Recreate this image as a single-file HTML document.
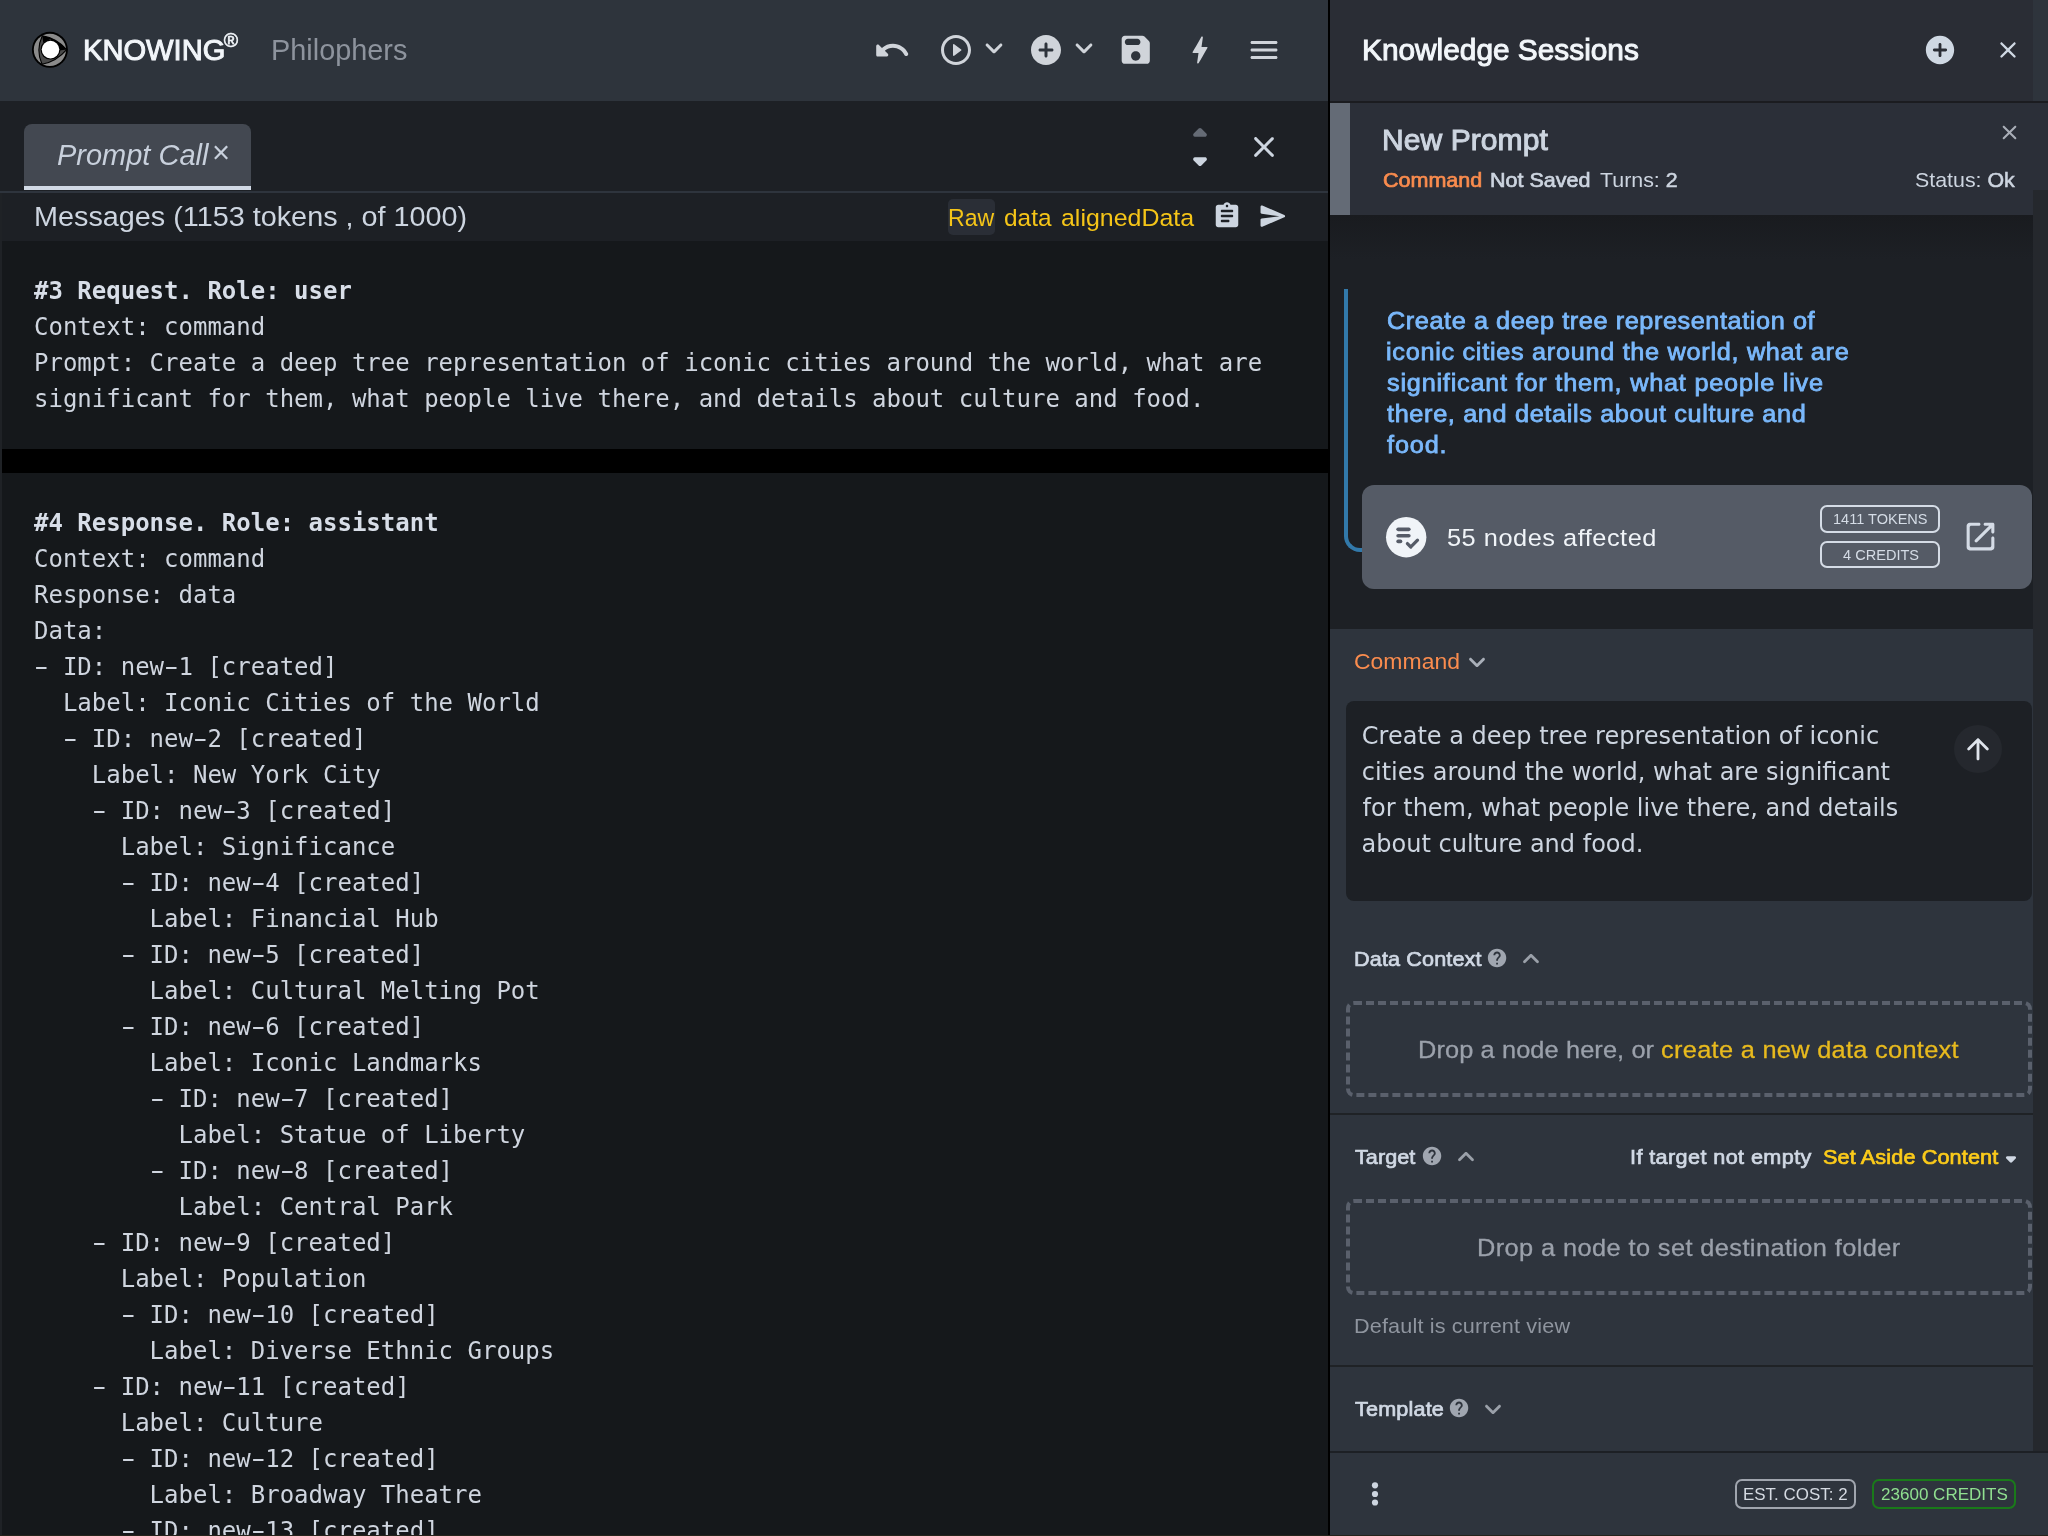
<!DOCTYPE html>
<html lang="en">
<head>
<meta charset="utf-8">
<title>KNOWING - Philophers</title>
<style>
*{box-sizing:border-box;margin:0;padding:0}
html,body{width:2048px;height:1536px;overflow:hidden;background:#15181b}
body{font-family:"Liberation Sans",sans-serif;color:#d0d6e0;position:relative}
.abs{position:absolute}
.t{position:absolute;white-space:pre;line-height:1;transform-origin:0 0}
svg{position:absolute;display:block;overflow:visible}
#left{position:absolute;left:0;top:0;width:1328px;height:1536px;background:#15181b;overflow:hidden;will-change:transform}
#lhead{position:absolute;left:0;top:0;width:1328px;height:101px;background:#2e343c}
#tabbar{position:absolute;left:0;top:101px;width:1328px;height:90px;background:#1d2025}
#tab{position:absolute;left:24px;top:124px;width:227px;height:66px;background:#434851;border-radius:8px 8px 0 0;border-bottom:4px solid #d2dae6}
#tabline{position:absolute;left:0;top:191px;width:1328px;height:2px;background:#2e343d}
#msgbar{position:absolute;left:0;top:193px;width:1328px;height:48px;background:#1d2025}
#ledge{position:absolute;left:0;top:193px;width:2px;height:1343px;background:#1f2226}
#band{position:absolute;left:2px;top:449px;width:1326px;height:24px;background:#000}
pre{position:absolute;left:34px;font-family:"DejaVu Sans Mono","Liberation Mono",monospace;font-size:24px;line-height:36px;color:#cfd5df;white-space:pre}
pre b{font-weight:bold;color:#d8dee8}
#divider{position:absolute;left:1328px;top:0;width:2px;height:1536px;background:#000}
#right{position:absolute;left:1330px;top:0;width:718px;height:1536px;background:#1d2025;overflow:hidden;will-change:transform}
#rhead{position:absolute;left:0;top:0;width:718px;height:101px;background:#2a2d35}
#rheadsb{position:absolute;left:703px;top:0;width:15px;height:101px;background:#2e343c}
#rline{position:absolute;left:0;top:101px;width:718px;height:2px;background:#1b1c20}
#sess{position:absolute;left:0;top:103px;width:718px;height:112px;background:#2b2f38}
#strip{position:absolute;left:0;top:103px;width:20px;height:112px;background:#646b76}
#chat{position:absolute;left:0;top:215px;width:703px;height:414px;background:linear-gradient(#191b1f,#1d2025 44px)}
#form{position:absolute;left:0;top:629px;width:703px;height:822px;background:#2e343d}
#sb{position:absolute;left:703px;top:190px;width:15px;height:1261px;background:#25282d}
#foot{position:absolute;left:0;top:1451px;width:718px;height:85px;background:#2e343d;border-top:2px solid #1d2025}
pre .h{display:inline-block;transform:scaleX(1.7)}
#bline{z-index:5;position:absolute;left:0;top:1535px;width:2048px;height:1px;background:#25231b}
.sep{position:absolute;left:0;width:703px;height:2px;background:#1f2226}
.dash{position:absolute;left:16px;width:686px;height:96px;border:4px dashed #5a606c;border-radius:8px}
.sb{-webkit-text-stroke:0.55px currentColor}
.badge{position:absolute;border:2px solid #d5dce6;border-radius:7px}
</style>
</head>
<body>
<div id="left">
<div id="lhead"></div><div id="tabbar"></div><div id="tab"></div><div id="tabline"></div><div id="msgbar"></div><div id="ledge"></div><div id="band"></div>
<pre style="top:273px"><b>#3 Request. Role: user</b>
Context: command
Prompt: Create a deep tree representation of iconic cities around the world, what are
significant for them, what people live there, and details about culture and food.</pre>
<pre style="top:505px"><b>#4 Response. Role: assistant</b>
Context: command
Response: data
Data:
<span class="h">-</span> ID: new<span class="h">-</span>1 [created]
  Label: Iconic Cities of the World
  <span class="h">-</span> ID: new<span class="h">-</span>2 [created]
    Label: New York City
    <span class="h">-</span> ID: new<span class="h">-</span>3 [created]
      Label: Significance
      <span class="h">-</span> ID: new<span class="h">-</span>4 [created]
        Label: Financial Hub
      <span class="h">-</span> ID: new<span class="h">-</span>5 [created]
        Label: Cultural Melting Pot
      <span class="h">-</span> ID: new<span class="h">-</span>6 [created]
        Label: Iconic Landmarks
        <span class="h">-</span> ID: new<span class="h">-</span>7 [created]
          Label: Statue of Liberty
        <span class="h">-</span> ID: new<span class="h">-</span>8 [created]
          Label: Central Park
    <span class="h">-</span> ID: new<span class="h">-</span>9 [created]
      Label: Population
      <span class="h">-</span> ID: new<span class="h">-</span>10 [created]
        Label: Diverse Ethnic Groups
    <span class="h">-</span> ID: new<span class="h">-</span>11 [created]
      Label: Culture
      <span class="h">-</span> ID: new<span class="h">-</span>12 [created]
        Label: Broadway Theatre
      <span class="h">-</span> ID: new<span class="h">-</span>13 [created]
        Label: Museums</pre>
<svg id="logo" viewBox="0 0 48 48" width="48" height="48" style="left:26px;top:26px">
<circle cx="23.9" cy="23.8" r="18" fill="#000"/>
<circle cx="23.9" cy="23.8" r="16.1" fill="#8b8b8b"/>
<path d="M16.3 9.7Q31 12.2 40.6 23.6Q30.8 35.3 16 38.3Q9.6 24 16.3 9.7Z" fill="#4b4b4b" stroke="#000" stroke-width="1.1" stroke-linejoin="round"/>
<path d="M16.3 9.7Q31 12.2 40.6 23.6L33.5 24.4L24.5 13L17.2 16.5Z" fill="#000"/>
<circle cx="24.5" cy="23.6" r="10" fill="#000"/>
<circle cx="24.5" cy="23.6" r="8.8" fill="#fff"/>
</svg>
<div class="t" id="brand" style="left:83.01px;top:35px;font-size:29.3px;color:#f2f6fa;transform:scaleX(0.9943);-webkit-text-stroke:1.0px currentColor;">KNOWING</div>
<div class="t" id="reg" style="left:223.70px;top:31px;font-size:19.5px;color:#f2f6fa;-webkit-text-stroke:0.6px currentColor;">®</div>
<div class="t" id="proj" style="left:270.54px;top:35px;font-size:29.3px;color:#8d939d;transform:scaleX(0.9852);">Philophers</div>
<svg viewBox="0 0 24 24" width="38.3" height="38.3" style="left:872.85px;top:30.85px"><path fill="#d0d4da" d="M12.5 8c-2.65 0-5.05.99-6.9 2.6L3.71 8.71C3.08 8.08 2 8.52 2 9.41V15c0 .55.45 1 1 1h5.59c.89 0 1.34-1.08.71-1.71l-1.91-1.91c1.39-1.16 3.16-1.88 5.12-1.88 3.16 0 5.89 1.84 7.19 4.5.27.56.91.84 1.5.64.71-.23 1.07-1.04.75-1.72C20.23 10.42 16.65 8 12.5 8z"/></svg>
<svg viewBox="0 0 24 24" width="36" height="36" style="left:938px;top:32px"><path fill="#d0d4da" d="M10.8 15.9l4.67-3.5c.27-.2.27-.6 0-.8L10.8 8.1c-.33-.25-.8-.01-.8.4v7c0 .41.47.65.8.4zM12 2C6.48 2 2 6.48 2 12s4.48 10 10 10 10-4.48 10-10S17.52 2 12 2zm0 18c-4.41 0-8-3.59-8-8s3.59-8 8-8 8 3.59 8 8-3.59 8-8 8z"/></svg>
<svg viewBox="0 0 24 24" width="36" height="36" style="left:976px;top:30px"><path fill="#d0d4da" d="M15.88 9.29L12 13.17 8.12 9.29c-.39-.39-1.02-.39-1.41 0-.39.39-.39 1.02 0 1.41l4.59 4.59c.39.39 1.02.39 1.41 0l4.59-4.59c.39-.39.39-1.02 0-1.41-.39-.38-1.03-.39-1.42 0z"/></svg>
<svg viewBox="0 0 24 24" width="36" height="36" style="left:1028px;top:32px"><path fill="#d0d4da" d="M12 2C6.48 2 2 6.48 2 12s4.48 10 10 10 10-4.48 10-10S17.52 2 12 2zm4 11h-3v3c0 .55-.45 1-1 1s-1-.45-1-1v-3H8c-.55 0-1-.45-1-1s.45-1 1-1h3V8c0-.55.45-1 1-1s1 .45 1 1v3h3c.55 0 1 .45 1 1s-.45 1-1 1z"/></svg>
<svg viewBox="0 0 24 24" width="36" height="36" style="left:1066px;top:30px"><path fill="#d0d4da" d="M15.88 9.29L12 13.17 8.12 9.29c-.39-.39-1.02-.39-1.41 0-.39.39-.39 1.02 0 1.41l4.59 4.59c.39.39 1.02.39 1.41 0l4.59-4.59c.39-.39.39-1.02 0-1.41-.39-.38-1.03-.39-1.42 0z"/></svg>
<svg viewBox="0 0 24 24" width="37.5" height="37.5" style="left:1117.25px;top:31.25px"><path fill="#d0d4da" d="M17.59 3.59c-.38-.38-.89-.59-1.42-.59H5c-1.11 0-2 .9-2 2v14c0 1.1.9 2 2 2h14c1.1 0 2-.9 2-2V7.83c0-.53-.21-1.04-.59-1.41l-2.82-2.83zM12 19c-1.66 0-3-1.34-3-3s1.34-3 3-3 3 1.34 3 3-1.34 3-3 3zm1-10H7c-1.1 0-2-.9-2-2s.9-2 2-2h6c1.1 0 2 .9 2 2s-.9 2-2 2z"/></svg>
<svg viewBox="0 0 24 24" width="36" height="36" style="left:1182px;top:32px"><path fill="#d0d4da" d="M10.67 21c-.35 0-.62-.31-.57-.66L11 14H7.5c-.88 0-.33-.75-.31-.78 1.26-2.23 3.15-5.53 5.65-9.93.1-.18.3-.29.5-.29.35 0 .62.31.57.66l-.9 6.34h3.51c.4 0 .62.19.4.66-3.29 5.74-5.2 9.09-5.75 10.05-.1.18-.29.29-.5.29z"/></svg>
<svg viewBox="0 0 24 24" width="36" height="36" style="left:1246px;top:32px"><path fill="#d0d4da" d="M4 18h16c.55 0 1-.45 1-1s-.45-1-1-1H4c-.55 0-1 .45-1 1s.45 1 1 1zm0-5h16c.55 0 1-.45 1-1s-.45-1-1-1H4c-.55 0-1 .45-1 1s.45 1 1 1zM3 7c0 .55.45 1 1 1h16c.55 0 1-.45 1-1s-.45-1-1-1H4c-.55 0-1 .45-1 1z"/></svg>
<div class="t" id="tabtxt" style="left:57.21px;top:140px;font-size:29.3px;color:#c8d0dc;transform:scaleX(0.9892);font-style:italic;">Prompt Call</div>
<div class="t" id="tabx" style="left:212.00px;top:137px;font-size:31px;color:#c8d0dc;">×</div>
<svg viewBox="0 0 24 24" width="46" height="46" style="left:1177px;top:110.1px"><path fill="#656b75" d="M8.71 12.29L11.3 9.7c.39-.39 1.02-.39 1.41 0l2.59 2.59c.63.63.18 1.71-.71 1.71H9.41c-.89 0-1.33-1.08-.7-1.71z"/></svg>
<svg viewBox="0 0 24 24" width="46" height="46" style="left:1177px;top:138px"><path fill="#cdd5e0" d="M8.71 11.71l2.59 2.59c.39.39 1.02.39 1.41 0l2.59-2.59c.63-.63.18-1.71-.71-1.71H9.41c-.89 0-1.33 1.08-.7 1.71z"/></svg>
<svg viewBox="0 0 24 24" width="36" height="36" style="left:1246px;top:129px"><path fill="#cdd5e0" d="M18.3 5.71c-.39-.39-1.02-.39-1.41 0L12 10.59 7.11 5.7c-.39-.39-1.02-.39-1.41 0-.39.39-.39 1.02 0 1.41L10.59 12 5.7 16.89c-.39.39-.39 1.02 0 1.41.39.39 1.02.39 1.41 0L12 13.41l4.89 4.89c.39.39 1.02.39 1.41 0 .39-.39.39-1.02 0-1.41L13.41 12l4.89-4.89c.38-.38.38-1.02 0-1.4z"/></svg>
<div class="t" id="msgs" style="left:33.70px;top:202px;font-size:28.2px;color:#cdd5e0;transform:scaleX(1.0214);">Messages (1153 tokens , of 1000)</div>
<div class="abs" id="rawbg" style="left:948px;top:199px;width:47px;height:36px;background:#2a2e36;border-radius:5px"></div>
<div class="t" id="raw" style="left:947.50px;top:206px;font-size:24.3px;color:#f5c518;letter-spacing:-0.039px;transform:scaleX(0.9500);">Raw</div>
<div class="t" id="data" style="left:1003.50px;top:206px;font-size:24.3px;color:#f5c518;transform:scaleX(1.0043);">data</div>
<div class="t" id="aligned" style="left:1061.47px;top:206px;font-size:24.3px;color:#f5c518;transform:scaleX(1.0268);">alignedData</div>
<svg viewBox="0 0 24 24" width="30" height="30" style="left:1212px;top:201px"><path fill="#cdd5e0" d="M19 3h-4.18C14.4 1.84 13.3 1 12 1s-2.4.84-2.82 2H5c-1.1 0-2 .9-2 2v14c0 1.1.9 2 2 2h14c1.1 0 2-.9 2-2V5c0-1.1-.9-2-2-2zm-7 0c.55 0 1 .45 1 1s-.45 1-1 1-1-.45-1-1 .45-1 1-1zm1 14H8c-.55 0-1-.45-1-1s.45-1 1-1h5c.55 0 1 .45 1 1s-.45 1-1 1zm3-4H8c-.55 0-1-.45-1-1s.45-1 1-1h8c.55 0 1 .45 1 1s-.45 1-1 1zm0-4H8c-.55 0-1-.45-1-1s.45-1 1-1h8c.55 0 1 .45 1 1s-.45 1-1 1z"/></svg>
<svg viewBox="0 0 24 24" width="30.3" height="30.3" style="left:1257.65px;top:200.85px"><path fill="#cdd5e0" d="M3.4 20.4l17.45-7.48c.81-.35.81-1.49 0-1.84L3.4 3.6c-.66-.29-1.39.2-1.39.91L2 9.12c0 .5.37.93.87.99L17 12 2.87 13.88c-.5.07-.87.5-.87 1l.01 4.61c0 .71.73 1.2 1.39.91z"/></svg>
</div>
<div id="divider"></div>
<div id="right">
<div id="rhead"></div><div id="rheadsb"></div><div id="rline"></div><div id="sess"></div><div id="strip"></div><div id="chat"></div><div id="form"></div><div id="sb"></div><div id="foot"></div>
<div class="t" id="ks" style="left:32.24px;top:36px;font-size:29px;color:#f2f6fa;transform:scaleX(1.0283);-webkit-text-stroke:0.99px currentColor;">Knowledge Sessions</div>
<svg viewBox="0 0 24 24" width="34" height="34" style="left:593px;top:33px"><path fill="#cfd8e3" d="M12 2C6.48 2 2 6.48 2 12s4.48 10 10 10 10-4.48 10-10S17.52 2 12 2zm4 11h-3v3c0 .55-.45 1-1 1s-1-.45-1-1v-3H8c-.55 0-1-.45-1-1s.45-1 1-1h3V8c0-.55.45-1 1-1s1 .45 1 1v3h3c.55 0 1 .45 1 1s-.45 1-1 1z"/></svg>
<svg viewBox="0 0 24 24" width="28" height="28" style="left:664px;top:36px"><path fill="#cfd8e3" d="M18.3 5.71c-.39-.39-1.02-.39-1.41 0L12 10.59 7.11 5.7c-.39-.39-1.02-.39-1.41 0-.39.39-.39 1.02 0 1.41L10.59 12 5.7 16.89c-.39.39-.39 1.02 0 1.41.39.39 1.02.39 1.41 0L12 13.41l4.89 4.89c.39.39 1.02.39 1.41 0 .39-.39.39-1.02 0-1.41L13.41 12l4.89-4.89c.38-.38.38-1.02 0-1.4z"/></svg>
<div class="t" id="np" style="left:51.53px;top:126px;font-size:29px;color:#cdd5e0;letter-spacing:0.067px;transform:scaleX(1.0350);-webkit-text-stroke:0.99px currentColor;">New Prompt</div>
<svg viewBox="0 0 24 24" width="25" height="25" style="left:666.5px;top:119.5px"><path fill="#a9aeb7" d="M18.3 5.71c-.39-.39-1.02-.39-1.41 0L12 10.59 7.11 5.7c-.39-.39-1.02-.39-1.41 0-.39.39-.39 1.02 0 1.41L10.59 12 5.7 16.89c-.39.39-.39 1.02 0 1.41.39.39 1.02.39 1.41 0L12 13.41l4.89 4.89c.39.39 1.02.39 1.41 0 .39-.39.39-1.02 0-1.41L13.41 12l4.89-4.89c.38-.38.38-1.02 0-1.4z"/></svg>
<div class="t" id="m1" style="left:52.83px;top:170px;font-size:20.9px;color:#fa8c4e;transform:scaleX(1.0301);-webkit-text-stroke:0.71px currentColor;">Command</div>
<div class="t" id="m2" style="left:160.01px;top:170px;font-size:20.9px;color:#cdd5e0;transform:scaleX(1.0289);-webkit-text-stroke:0.71px currentColor;">Not Saved</div>
<div class="t" id="m3" style="left:269.79px;top:170px;font-size:20.9px;color:#cdd5e0;transform:scaleX(1.0236);">Turns: <span class="sb">2</span></div>
<div class="t" id="status" style="left:584.98px;top:170px;font-size:20.9px;color:#cdd5e0;transform:scaleX(1.0228);">Status: <span class="sb">Ok</span></div>
<div class="abs" id="thread" style="left:14px;top:289px;width:30px;height:262.5px;border-left:4px solid #3279aa;border-bottom:4px solid #3279aa;border-bottom-left-radius:16px"></div>
<div class="t" id="bl0" style="left:56.62px;top:309px;font-size:24.4px;color:#7ab8fb;letter-spacing:0.567px;transform:scaleX(1.0350);-webkit-text-stroke:0.83px currentColor;">Create a deep tree representation of</div>
<div class="t" id="bl1" style="left:56.11px;top:340px;font-size:24.4px;color:#7ab8fb;letter-spacing:0.687px;transform:scaleX(1.0350);-webkit-text-stroke:0.83px currentColor;">iconic cities around the world, what are</div>
<div class="t" id="bl2" style="left:57.14px;top:371px;font-size:24.4px;color:#7ab8fb;letter-spacing:0.760px;transform:scaleX(1.0350);-webkit-text-stroke:0.83px currentColor;">significant for them, what people live</div>
<div class="t" id="bl3" style="left:57.40px;top:402px;font-size:24.4px;color:#7ab8fb;letter-spacing:0.635px;transform:scaleX(1.0350);-webkit-text-stroke:0.83px currentColor;">there, and details about culture and</div>
<div class="t" id="bl4" style="left:57.40px;top:433px;font-size:24.4px;color:#7ab8fb;letter-spacing:0.836px;transform:scaleX(1.0350);-webkit-text-stroke:0.83px currentColor;">food.</div>
<div class="abs" id="card" style="left:32px;top:485px;width:670px;height:104px;background:#555b66;border-radius:12px"></div>
<svg id="chk" viewBox="0 0 40 40" width="40.4" height="40.4" style="left:55.7px;top:516.9px">
<circle cx="20" cy="20" r="20" fill="#f0f4f8"/>
<g stroke="#555b67" stroke-width="3.6" stroke-linecap="round" fill="none">
<path d="M12 12.2H22.6"/><path d="M12 18.6H22.6"/><path d="M12 24.2H14.4"/>
<path d="M21.2 26.3L24.6 29.7L31.2 23" stroke-linejoin="round" stroke-width="3.2"/>
</g></svg>
<div class="t" id="nodes" style="left:116.66px;top:526px;font-size:24.5px;color:#f0f4f8;letter-spacing:0.498px;transform:scaleX(1.0350);">55 nodes affected</div>
<div class="badge" id="b1" style="left:490px;top:505px;width:120px;height:28px"></div>
<div class="badge" id="b2" style="left:490px;top:541px;width:120px;height:27px"></div>
<div class="t" id="b1t" style="left:503.01px;top:512px;font-size:14.7px;color:#d5dce6;transform:scaleX(0.9899);">1411 TOKENS</div>
<div class="t" id="b2t" style="left:512.55px;top:548px;font-size:14.7px;color:#d5dce6;transform:scaleX(0.9914);">4 CREDITS</div>
<svg viewBox="0 0 24 24" width="37" height="37" style="left:631.5px;top:518.3px"><path fill="#d5dce6" d="M18 19H6c-.55 0-1-.45-1-1V6c0-.55.45-1 1-1h5c.55 0 1-.45 1-1s-.45-1-1-1H5c-1.11 0-2 .9-2 2v14c0 1.1.9 2 2 2h14c1.1 0 2-.9 2-2v-6c0-.55-.45-1-1-1s-1 .45-1 1v5c0 .55-.45 1-1 1zM14 4c0 .55.45 1 1 1h2.59l-9.13 9.13c-.39.39-.39 1.02 0 1.41.39.39 1.02.39 1.41 0L19 6.41V9c0 .55.45 1 1 1s1-.45 1-1V4c0-.55-.45-1-1-1h-5c-.55 0-1 .45-1 1z"/></svg>
<div class="t" id="cmd" style="left:24.22px;top:651px;font-size:22.5px;color:#fa8c4e;transform:scaleX(1.0208);">Command</div>
<svg viewBox="0 0 24 24" width="34" height="34" style="left:130.2px;top:645.2px"><path fill="#a9afb9" d="M15.88 9.29L12 13.17 8.12 9.29c-.39-.39-1.02-.39-1.41 0-.39.39-.39 1.02 0 1.41l4.59 4.59c.39.39 1.02.39 1.41 0l4.59-4.59c.39-.39.39-1.02 0-1.41-.39-.38-1.03-.39-1.42 0z"/></svg>
<div class="abs" id="ta" style="left:16px;top:701px;width:686px;height:200px;background:#1d2025;border-radius:8px"></div>
<div class="t" id="ta0" style="left:31.85px;top:724px;font-size:24px;color:#cdd5e0;font-family:'DejaVu Sans','Liberation Sans',sans-serif;">Create a deep tree representation of iconic</div>
<div class="t" id="ta1" style="left:31.85px;top:760px;font-size:24px;color:#cdd5e0;font-family:'DejaVu Sans','Liberation Sans',sans-serif;">cities around the world, what are significant</div>
<div class="t" id="ta2" style="left:32.60px;top:796px;font-size:24px;color:#cdd5e0;font-family:'DejaVu Sans','Liberation Sans',sans-serif;">for them, what people live there, and details</div>
<div class="t" id="ta3" style="left:31.60px;top:832px;font-size:24px;color:#cdd5e0;font-family:'DejaVu Sans','Liberation Sans',sans-serif;">about culture and food.</div>
<div class="abs" id="upbtn" style="left:624px;top:725px;width:48px;height:48px;border-radius:24px;background:#25282e"></div>
<svg viewBox="0 0 24 24" width="34" height="34" style="left:631px;top:732px"><path fill="#dfe4ec" d="M13 19V7.83l4.88 4.88c.39.39 1.03.39 1.42 0 .39-.39.39-1.02 0-1.41l-6.59-6.59c-.39-.39-1.02-.39-1.41 0l-6.6 6.58c-.39.39-.39 1.02 0 1.41.39.39 1.02.39 1.41 0L11 7.83V19c0 .55.45 1 1 1s1-.45 1-1z"/></svg>
<div class="t" id="dc" style="left:23.81px;top:949px;font-size:20.9px;color:#d0d8e4;letter-spacing:0.120px;transform:scaleX(1.0350);-webkit-text-stroke:0.71px currentColor;">Data Context</div>
<svg viewBox="0 0 24 24" width="22.1" height="22.1" style="left:156.35px;top:946.95px"><path fill="#a0a6b0" d="M12 2C6.48 2 2 6.48 2 12s4.48 10 10 10 10-4.48 10-10S17.52 2 12 2zm1 17h-2v-2h2v2zm2.07-7.75l-.9.92C13.45 12.9 13 13.5 13 15h-2v-.5c0-1.1.45-2.1 1.17-2.83l1.24-1.26c.37-.36.59-.86.59-1.41 0-1.1-.9-2-2-2s-2 .9-2 2H8c0-2.21 1.79-4 4-4s4 1.79 4 4c0 .88-.36 1.68-.93 2.25z"/></svg>
<svg viewBox="0 0 24 24" width="34" height="34" style="left:184.4px;top:942.1px"><path fill="#9aa0a9" d="M11.29 8.71L6.7 13.3c-.39.39-.39 1.02 0 1.41.39.39 1.02.39 1.41 0L12 10.83l3.88 3.88c.39.39 1.02.39 1.41 0 .39-.39.39-1.02 0-1.41L12.7 8.71c-.38-.39-1.02-.39-1.41 0z"/></svg>
<div class="dash" id="d1" style="top:1001px"></div>
<div class="t" id="d1a" style="left:87.99px;top:1038px;font-size:24.5px;color:#9ba1ab;letter-spacing:0.105px;transform:scaleX(1.0350);-webkit-text-stroke:0.3px currentColor;">Drop a node here, or</div>
<div class="t" id="d1b" style="left:331.46px;top:1038px;font-size:24.5px;color:#e8ba1e;letter-spacing:0.291px;transform:scaleX(1.0350);-webkit-text-stroke:0.3px currentColor;">create a new data context</div>
<div class="sep" style="top:1113px"></div>
<div class="t" id="tg" style="left:25.00px;top:1147px;font-size:20.9px;color:#d0d8e4;letter-spacing:0.041px;transform:scaleX(1.0350);-webkit-text-stroke:0.71px currentColor;">Target</div>
<svg viewBox="0 0 24 24" width="22.1" height="22.1" style="left:90.85px;top:1144.95px"><path fill="#a0a6b0" d="M12 2C6.48 2 2 6.48 2 12s4.48 10 10 10 10-4.48 10-10S17.52 2 12 2zm1 17h-2v-2h2v2zm2.07-7.75l-.9.92C13.45 12.9 13 13.5 13 15h-2v-.5c0-1.1.45-2.1 1.17-2.83l1.24-1.26c.37-.36.59-.86.59-1.41 0-1.1-.9-2-2-2s-2 .9-2 2H8c0-2.21 1.79-4 4-4s4 1.79 4 4c0 .88-.36 1.68-.93 2.25z"/></svg>
<svg viewBox="0 0 24 24" width="34" height="34" style="left:119px;top:1140.4px"><path fill="#9aa0a9" d="M11.29 8.71L6.7 13.3c-.39.39-.39 1.02 0 1.41.39.39 1.02.39 1.41 0L12 10.83l3.88 3.88c.39.39 1.02.39 1.41 0 .39-.39.39-1.02 0-1.41L12.7 8.71c-.38-.39-1.02-.39-1.41 0z"/></svg>
<div class="t" id="ift" style="left:300.25px;top:1147px;font-size:20.9px;color:#d0d8e4;letter-spacing:0.381px;transform:scaleX(1.0350);-webkit-text-stroke:0.71px currentColor;">If target not empty</div>
<div class="t" id="sac" style="left:493.38px;top:1147px;font-size:20.9px;color:#fccb1a;letter-spacing:0.130px;transform:scaleX(1.0350);-webkit-text-stroke:0.71px currentColor;">Set Aside Content</div>
<svg viewBox="0 0 24 24" width="34" height="34" style="left:664px;top:1142.2px"><path fill="#d0d8e4" d="M8.71 11.71l2.59 2.59c.39.39 1.02.39 1.41 0l2.59-2.59c.63-.63.18-1.71-.71-1.71H9.41c-.89 0-1.33 1.08-.7 1.71z"/></svg>
<div class="dash" id="d2" style="top:1199px"></div>
<div class="t" id="d2t" style="left:146.89px;top:1236px;font-size:24.5px;color:#9ba1ab;letter-spacing:0.388px;transform:scaleX(1.0350);-webkit-text-stroke:0.3px currentColor;">Drop a node to set destination folder</div>
<div class="t" id="dflt" style="left:23.69px;top:1316px;font-size:20.9px;color:#8f959f;letter-spacing:0.146px;transform:scaleX(1.0350);">Default is current view</div>
<div class="sep" style="top:1365px"></div>
<div class="t" id="tp" style="left:25.00px;top:1399px;font-size:20.9px;color:#d0d8e4;letter-spacing:0.152px;transform:scaleX(1.0350);-webkit-text-stroke:0.71px currentColor;">Template</div>
<svg viewBox="0 0 24 24" width="22.1" height="22.1" style="left:118.15px;top:1396.85px"><path fill="#a0a6b0" d="M12 2C6.48 2 2 6.48 2 12s4.48 10 10 10 10-4.48 10-10S17.52 2 12 2zm1 17h-2v-2h2v2zm2.07-7.75l-.9.92C13.45 12.9 13 13.5 13 15h-2v-.5c0-1.1.45-2.1 1.17-2.83l1.24-1.26c.37-.36.59-.86.59-1.41 0-1.1-.9-2-2-2s-2 .9-2 2H8c0-2.21 1.79-4 4-4s4 1.79 4 4c0 .88-.36 1.68-.93 2.25z"/></svg>
<svg viewBox="0 0 24 24" width="34" height="34" style="left:146.2px;top:1392.1px"><path fill="#9aa0a9" d="M15.88 9.29L12 13.17 8.12 9.29c-.39-.39-1.02-.39-1.41 0-.39.39-.39 1.02 0 1.41l4.59 4.59c.39.39 1.02.39 1.41 0l4.59-4.59c.39-.39.39-1.02 0-1.41-.39-.38-1.03-.39-1.42 0z"/></svg>
<svg viewBox="0 0 10 30" width="10" height="30" style="left:40px;top:1479px"><circle cx="5" cy="6.3" r="3.1" fill="#cdd5e0"/><circle cx="5" cy="15" r="3.1" fill="#cdd5e0"/><circle cx="5" cy="23.5" r="3.1" fill="#cdd5e0"/></svg>
<div class="badge" id="est" style="left:405px;top:1479px;width:121px;height:30px;border-color:#a0a5ae"></div>
<div class="badge" id="cr" style="left:542px;top:1479px;width:144px;height:30px;border-color:#1a7a1a"></div>
<div class="t" id="estt" style="left:413.30px;top:1486px;font-size:17px;color:#d5dae2;transform:scaleX(0.9971);">EST. COST: 2</div>
<div class="t" id="crt" style="left:551.35px;top:1486px;font-size:17px;color:#90e090;transform:scaleX(1.0016);">23600 CREDITS</div>
</div>
<div id="bline"></div>
</body>
</html>
